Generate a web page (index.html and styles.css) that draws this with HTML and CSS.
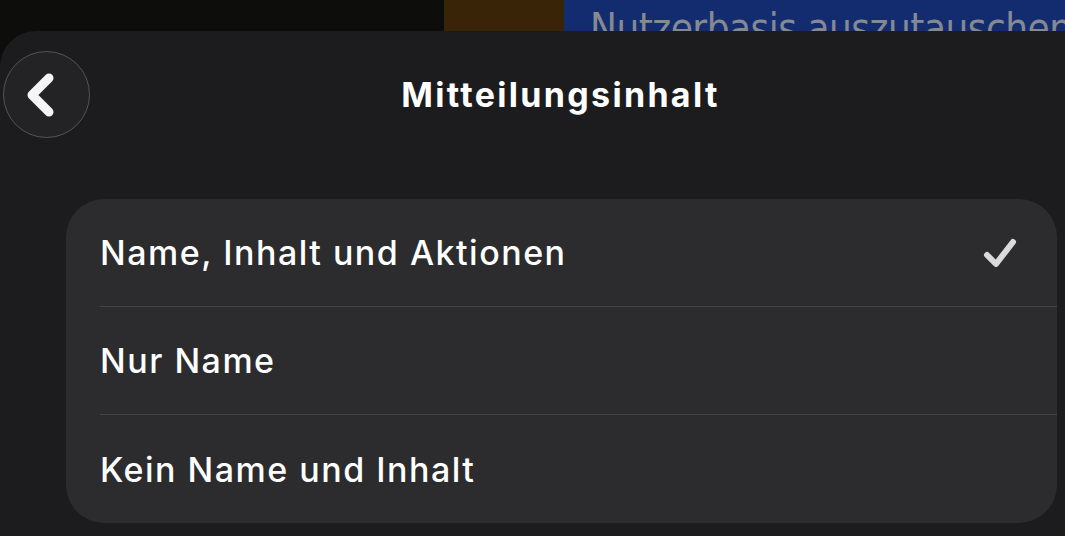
FILE: index.html
```html
<!DOCTYPE html>
<html lang="de">
<head>
  <meta charset="UTF-8">
  <title>Mitteilungsinhalt</title>
  <link rel="stylesheet" href="styles.css">
</head>
<body>
  <div class="backdrop">
    <div class="bg-dark"></div>
    <div class="bg-brown"></div>
    <div class="bg-blue"><span>Nutzerbasis auszutauschen</span></div>
  </div>

  <div class="sheet">
    <div class="header">
      <button class="back" aria-label="Zurück">
        <svg width="40" height="50" viewBox="0 0 40 50">
          <path d="M25 8 L8 25 L25 42" fill="none" stroke="#f5f5f7" stroke-width="9" stroke-linecap="round" stroke-linejoin="round"/>
        </svg>
      </button>
      <h1>Mitteilungsinhalt</h1>
      <div class="spacer"></div>
    </div>

    <div class="card">
      <div class="row">
        <span>Name, Inhalt und Aktionen</span>
        <svg class="check" width="40" height="36" viewBox="0 0 40 36">
          <path d="M7 19 L16 28 L33 6" fill="none" stroke="#dadadc" stroke-width="6" stroke-linecap="round" stroke-linejoin="round"/>
        </svg>
      </div>
      <div class="row">
        <span>Nur Name</span>
      </div>
      <div class="row">
        <span>Kein Name und Inhalt</span>
      </div>
    </div>
  </div>
</body>
</html>
```

FILE: styles.css
```css
html, body {
  margin: 0;
  height: 100%;
}
body {
  background: #0d0e0c;
  font-family: Inter, "Noto Sans", sans-serif;
  color: #fff;
  overflow: hidden;
}
.backdrop {
  display: flex;
  height: 31px;
  overflow: hidden;
}
.bg-dark {
  width: 444px;
  background: #0d0e0c;
}
.bg-brown {
  width: 120px;
  background: #3a2407;
}
.bg-blue {
  flex: 1;
  background: #132c70;
  padding-left: 26px;
  white-space: nowrap;
  overflow: hidden;
}
.bg-blue span {
  display: block;
  margin-top: 8px;
  line-height: 40px;
  font-family: "DejaVu Sans", sans-serif;
  font-stretch: condensed;
  font-size: 40px;
  color: #858990;
  letter-spacing: -0.5px;
}
.sheet {
  background: #1c1c1e;
  border-top-left-radius: 36px;
  height: 505px;
  padding-top: 20px;
  box-sizing: border-box;
}
.header {
  display: flex;
  align-items: center;
  padding-left: 3px;
}
.back {
  width: 87px;
  height: 87px;
  border-radius: 50%;
  border: 1.5px solid #545458;
  background: #232325;
  display: flex;
  align-items: center;
  justify-content: center;
  padding: 0 6px 0 0;
}
.header h1 {
  flex: 1;
  margin: 0;
  text-align: center;
  font-size: 34px;
  font-weight: 700;
  letter-spacing: 2.3px;
}
.spacer {
  width: 34px;
}
.card {
  margin: 61px 8px 0 66px;
  background: #2c2c2e;
  border-radius: 38px;
  overflow: hidden;
}
.row {
  height: 107px;
  margin-left: 34px;
  padding-right: 37px;
  display: flex;
  align-items: center;
  justify-content: space-between;
  font-size: 34px;
  font-weight: 500;
  letter-spacing: 1.5px;
  border-bottom: 1px solid #434346;
}
.row:last-child {
  border-bottom: none;
  height: 108px;
}
.check {
  margin-top: 2px;
}
```
